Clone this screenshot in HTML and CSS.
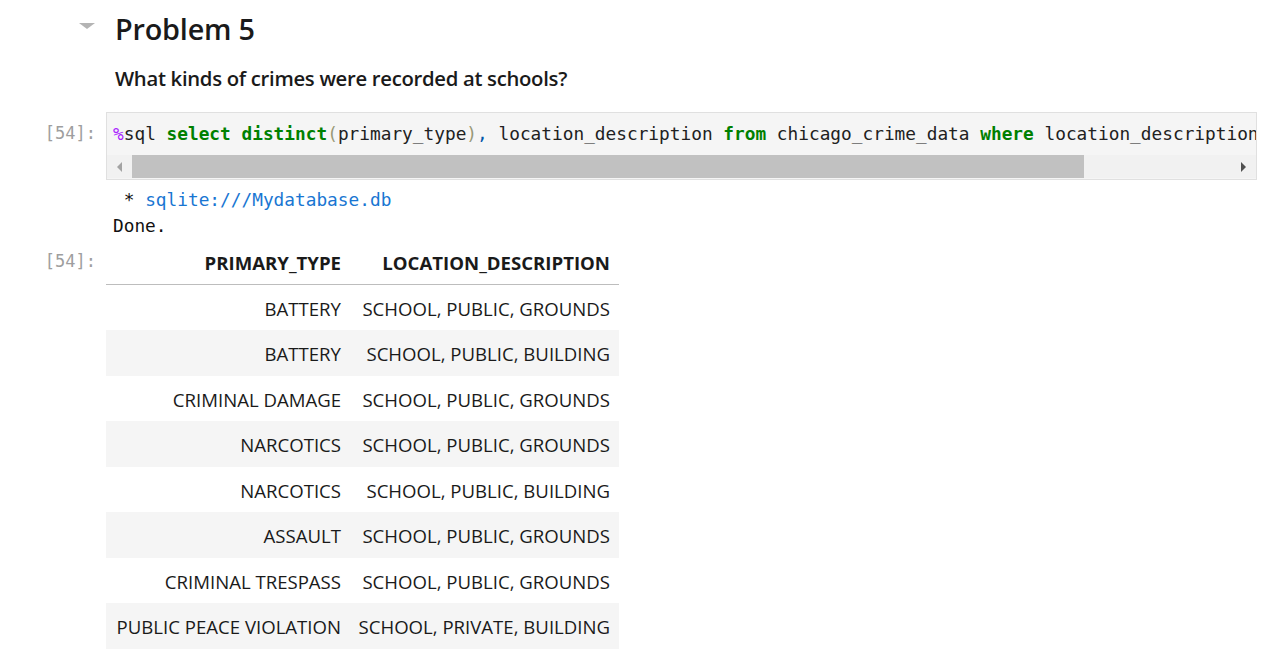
FILE: index.html
```html
<!DOCTYPE html>
<html>
<head>
<meta charset="utf-8">
<link rel="stylesheet" href="styles.css">
</head>
<body>
<div class="notebook">
  <div class="md-cell">
    <div class="heading-row">
      <div class="collapser"><span class="tri"></span></div>
      <h2 class="heading">Problem 5</h2>
    </div>
    <p class="question">What kinds of crimes were recorded at schools?</p>
  </div>

  <div class="code-cell">
    <div class="row">
      <div class="prompt">[54]:</div>
      <div class="input-box">
        <div class="code"><span class="op">%</span>sql <span class="kw">select</span> <span class="kw">distinct</span><span class="br">(</span>primary_type<span class="br">)</span><span class="pu">,</span> location_description <span class="kw">from</span> chicago_crime_data <span class="kw">where</span> location_description</div>
        <div class="hscroll">
          <div class="sbtn left"><span class="arr-l"></span></div>
          <div class="track"><div class="thumb"></div></div>
          <div class="sbtn right"><span class="arr-r"></span></div>
        </div>
      </div>
    </div>
    <div class="row">
      <div class="prompt"></div>
      <pre class="stdout"> * <span class="link">sqlite:///Mydatabase.db</span>
Done.</pre>
    </div>
    <div class="row">
      <div class="prompt out">[54]:</div>
      <table class="result">
        <thead>
          <tr><th class="c1">PRIMARY_TYPE</th><th class="c2">LOCATION_DESCRIPTION</th></tr>
        </thead>
        <tbody>
          <tr><td>BATTERY</td><td>SCHOOL, PUBLIC, GROUNDS</td></tr>
          <tr><td>BATTERY</td><td>SCHOOL, PUBLIC, BUILDING</td></tr>
          <tr><td>CRIMINAL DAMAGE</td><td>SCHOOL, PUBLIC, GROUNDS</td></tr>
          <tr><td>NARCOTICS</td><td>SCHOOL, PUBLIC, GROUNDS</td></tr>
          <tr><td>NARCOTICS</td><td>SCHOOL, PUBLIC, BUILDING</td></tr>
          <tr><td>ASSAULT</td><td>SCHOOL, PUBLIC, GROUNDS</td></tr>
          <tr><td>CRIMINAL TRESPASS</td><td>SCHOOL, PUBLIC, GROUNDS</td></tr>
          <tr><td>PUBLIC PEACE VIOLATION</td><td>SCHOOL, PRIVATE, BUILDING</td></tr>
        </tbody>
      </table>
    </div>
  </div>
</div>
</body>
</html>
```

FILE: styles.css
```css
html, body {
  margin: 0;
  padding: 0;
  background: #ffffff;
}
body {
  font-family: "Open Sans", "Noto Sans", sans-serif;
  color: #212121;
  overflow: hidden;
}
.notebook {
  padding: 0 16px 0 0;
}
.md-cell {
  padding-top: 11px;
}
.heading-row {
  display: flex;
  align-items: center;
  height: 36px;
}
.collapser {
  width: 115px;
  display: flex;
  justify-content: flex-start;
  padding-left: 79px;
  box-sizing: border-box;
  height: 36px;
  align-items: flex-start;
}
.tri {
  margin-top: 12px;
  width: 0;
  height: 0;
  border-left: 8px solid transparent;
  border-right: 8px solid transparent;
  border-top: 6px solid #b4b4b4;
}
.heading {
  margin: 0;
  font-size: 28.8px;
  font-weight: 600;
  line-height: 36px;
  color: #1a1a1a;
  letter-spacing: -0.2px;
}
.question {
  margin: 17px 0 0 115px;
  font-size: 20.3px;
  font-weight: 600;
  line-height: 28px;
  color: #1a1a1a;
  letter-spacing: -0.3px;
}
.code-cell {
  margin-top: 20px;
}
.row {
  display: flex;
  align-items: flex-start;
}
.prompt {
  flex: 0 0 106px;
  box-sizing: border-box;
  padding-right: 10px;
  text-align: right;
  font-family: "DejaVu Sans Mono", "Liberation Mono", monospace;
  font-size: 17px;
  color: #9e9e9e;
  line-height: 26px;
  padding-top: 8px;
}
.prompt.out {
  padding-top: 9px;
}
.input-box {
  flex: 1;
  min-width: 0;
  border: 1px solid #e0e0e0;
  background: #f5f5f5;
}
.code {
  font-family: "DejaVu Sans Mono", "Liberation Mono", monospace;
  font-size: 17.8px;
  line-height: 26px;
  padding: 8px 6px 8px 6px;
  white-space: pre;
  overflow: hidden;
  color: #212121;
}
.kw { color: #008000; font-weight: bold; }
.op { color: #aa22ff; }
.br { color: #999977; }
.pu { color: #0055aa; }
.hscroll {
  display: flex;
  height: 23px;
  margin-bottom: 1px;
  background: #f1f1f1;
}
.sbtn {
  flex: 0 0 25px;
  display: flex;
  align-items: center;
  justify-content: center;
}
.arr-l {
  width: 0; height: 0;
  border-top: 5px solid transparent;
  border-bottom: 5px solid transparent;
  border-right: 5px solid #a3a3a3;
}
.arr-r {
  width: 0; height: 0;
  border-top: 5px solid transparent;
  border-bottom: 5px solid transparent;
  border-left: 5px solid #505050;
}
.track {
  flex: 1;
  display: flex;
  align-items: stretch;
}
.thumb {
  width: 952px;
  background: #c1c1c1;
}
.stdout {
  margin: 7px 0 0 0;
  padding-left: 7px;
  font-family: "DejaVu Sans Mono", "Liberation Mono", monospace;
  font-size: 17.8px;
  line-height: 26px;
  color: #111111;
}
.link { color: #1976d2; }
.result {
  border-collapse: collapse;
  table-layout: fixed;
  width: 513px;
  font-size: 18.6px;
  color: #1a1a1a;
}
.result th, .result td {
  text-align: right;
  padding: 2px 9px 0 4px;
  white-space: nowrap;
  height: 45.5px;
  box-sizing: border-box;
}
.result th {
  font-weight: 700;
  border-bottom: 1px solid #bdbdbd;
  height: 45.5px;
}
.c1 { width: 244px; }
.c2 { width: 269px; }
.result tbody tr:nth-child(even) {
  background: #f5f5f5;
}
```
